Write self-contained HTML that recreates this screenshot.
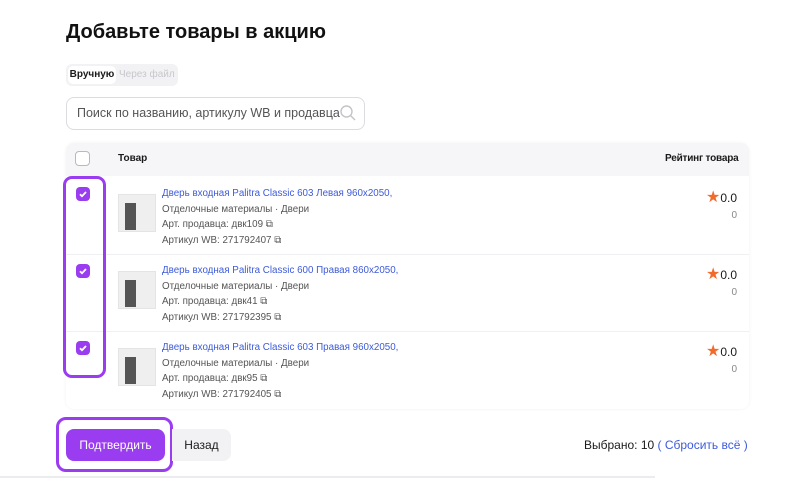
<!DOCTYPE html>
<html><head><meta charset="utf-8"><style>
*{margin:0;padding:0;box-sizing:border-box}
body{width:800px;height:493px;background:#fff;font-family:"Liberation Sans",sans-serif;position:relative;overflow:hidden;color:#1a1a1a}
.a{position:absolute}
h1{position:absolute;left:66px;top:21px;font-size:20px;font-weight:bold;color:#111}
.tabs{left:66px;top:64px;width:112px;height:22px;background:#f2f2f5;border-radius:6px}
.tab1{left:68px;top:66px;width:48px;height:18px;background:#fff;border-radius:5px;font-size:10px;font-weight:bold;line-height:18px;text-align:center}
.tab2{left:119px;top:66px;font-size:10px;line-height:18px;color:#c8c8cc}
.search{left:66px;top:97px;width:299px;height:33px;border:1px solid #dcdce0;border-radius:8px;font-size:12.5px;color:#555;line-height:31px;padding-left:10px}
.tbl{left:66px;top:143px;width:683px;height:266px;border-radius:8px;box-shadow:0 0 3px rgba(0,0,0,.06)}
.hdr{left:66px;top:143px;width:683px;height:33px;background:#f6f6f9;border-radius:8px 8px 0 0}
.hl{font-size:10px;font-weight:bold;top:153px}
.cb{width:14px;height:14px;border-radius:4px;background:#9a3df0}
.cb svg{display:block}
.sep{left:66px;width:683px;height:1px;background:#f0f0f3}
.img{width:38px;height:38px;background:#efefef;border:1px solid #e4e4e4}
.door{position:absolute;left:6px;top:8px;width:11px;height:27px;background:#555}
.t{font-size:9.8px;line-height:15.5px;color:#555}
.t .l{color:#3d5bd9}
.r{font-size:12px;text-align:right;width:60px}
.btn1{left:66px;top:429px;width:99px;height:32px;background:#9a3df0;color:#fff;border-radius:8px;font-size:12px;line-height:32px;text-align:center}
.btn2{left:172px;top:429px;width:59px;height:32px;background:#f2f2f4;border-radius:0 8px 8px 0;font-size:12px;line-height:32px;text-align:center}
</style></head><body>
<h1>Добавьте товары в акцию</h1>
<div class="a tabs"></div><div class="a tab1">Вручную</div><div class="a tab2">Через файл</div>
<div class="a search">Поиск по названию, артикулу WB и продавца</div>
<svg class="a" style="left:339px;top:104px" width="18" height="18" viewBox="0 0 18 18"><circle cx="7.5" cy="7.5" r="5.5" fill="none" stroke="#c4c4c8" stroke-width="1.4"/><path d="M11.5 11.5L16 16" stroke="#c4c4c8" stroke-width="1.4"/></svg>
<div class="a tbl"></div>
<div class="a hdr"></div>
<div class="a" style="left:75px;top:151px;width:15px;height:15px;border:1.5px solid #b8b8c0;border-radius:4px;background:#fff"></div>
<div class="a hl" style="left:118px">Товар</div>
<div class="a hl" style="left:665px;letter-spacing:-0.2px">Рейтинг товара</div>
<div class="a sep" style="top:254px"></div><div class="a sep" style="top:331px"></div>

<div class="a" style="left:63px;top:176px;width:43px;height:202px;border:3px solid #9a3df0;border-radius:9px"></div>
<div class="a" style="left:56px;top:417px;width:117px;height:55px;border:3px solid #9a3df0;border-radius:10px"></div>

<div class="a cb" style="left:76px;top:187px"><svg width="14" height="14"><path d="M4 7.2l2 2 4-4.2" stroke="#fff" stroke-width="1.8" fill="none"/></svg></div>
<div class="a cb" style="left:76px;top:264px"><svg width="14" height="14"><path d="M4 7.2l2 2 4-4.2" stroke="#fff" stroke-width="1.8" fill="none"/></svg></div>
<div class="a cb" style="left:76px;top:341px"><svg width="14" height="14"><path d="M4 7.2l2 2 4-4.2" stroke="#fff" stroke-width="1.8" fill="none"/></svg></div>

<div class="a img" style="left:118px;top:194px"><div class="door"></div></div>
<div class="a img" style="left:118px;top:271px"><div class="door"></div></div>
<div class="a img" style="left:118px;top:348px"><div class="door"></div></div>

<div class="a t" style="left:162px;top:186px"><span class="l">Дверь входная Palitra Classic 603 Левая 960х2050,</span><br>Отделочные материалы · Двери<br>Арт. продавца: двк109 ⧉<br>Артикул WB: 271792407 ⧉</div>
<div class="a t" style="left:162px;top:263px"><span class="l">Дверь входная Palitra Classic 600 Правая 860х2050,</span><br>Отделочные материалы · Двери<br>Арт. продавца: двк41 ⧉<br>Артикул WB: 271792395 ⧉</div>
<div class="a t" style="left:162px;top:340px"><span class="l">Дверь входная Palitra Classic 603 Правая 960х2050,</span><br>Отделочные материалы · Двери<br>Арт. продавца: двк95 ⧉<br>Артикул WB: 271792405 ⧉</div>

<div class="a r" style="left:677px;top:187px"><span style="color:#f26b2b;font-size:16px">★</span>0.0<br><span style="font-size:10px;color:#888">0</span></div>
<div class="a r" style="left:677px;top:264px"><span style="color:#f26b2b;font-size:16px">★</span>0.0<br><span style="font-size:10px;color:#888">0</span></div>
<div class="a r" style="left:677px;top:341px"><span style="color:#f26b2b;font-size:16px">★</span>0.0<br><span style="font-size:10px;color:#888">0</span></div>

<div class="a btn2">Назад</div>
<div class="a btn1">Подтвердить</div>
<div class="a" style="left:584px;top:438px;font-size:12px">Выбрано: 10 <span style="color:#3d5bd9">( Сбросить всё )</span></div>
<div class="a" style="left:0;top:476px;width:655px;height:2px;background:#ececee"></div>
</body></html>
